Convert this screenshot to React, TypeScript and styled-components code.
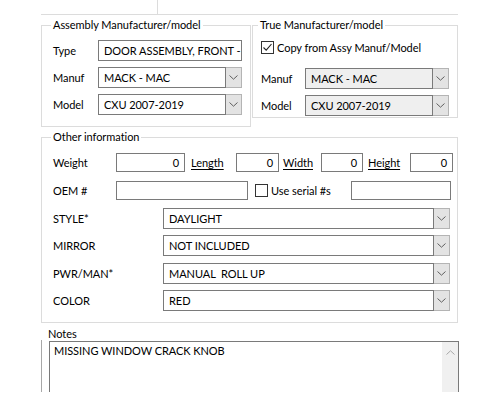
import React from "react";
import styled, { createGlobalStyle } from "styled-components";

const Global = createGlobalStyle`
  html, body { margin: 0; padding: 0; background: #fff; }
  body { font-family: Lato, "Liberation Sans", sans-serif; font-size: 11px; letter-spacing: -0.05px; color: #000; }
  * { box-sizing: border-box; }
`;

const Root = styled.div`
  width: 500px;
  height: 400px;
  overflow: hidden;
  background: #fff;
`;

const Column = styled.div`
  margin-left: 41px;
  width: 417px;
  display: flex;
  flex-direction: column;
`;

const TopStrip = styled.div`
  display: flex;
  height: 15px;
  border-bottom: 1px solid #dcdcdc;
`;

const TopCell = styled.div<{ $w: number }>`
  width: ${(p) => p.$w}px;
  border-right: 1px solid #dcdcdc;
`;

const GroupRow = styled.div`
  display: flex;
  align-items: flex-start;
  gap: 1px;
  margin-top: 10px;
`;

const Group = styled.section<{ $w: number; $pad: string; $mt?: number }>`
  position: relative;
  margin-top: ${(p) => p.$mt ?? 0}px;
  width: ${(p) => p.$w}px;
  border: 1px solid #dcdcdc;
  padding: ${(p) => p.$pad};
  display: flex;
  flex-direction: column;
`;

const Legend = styled.span<{ $left: number }>`
  position: absolute;
  top: -8px;
  left: ${(p) => p.$left}px;
  padding: 0 2px;
  height: 14px;
  line-height: 14px;
  background: #fff;
  white-space: nowrap;
`;

const Row = styled.div<{ $h: number; $mt?: number }>`
  display: flex;
  align-items: center;
  height: ${(p) => p.$h}px;
  margin-top: ${(p) => p.$mt ?? 0}px;
`;

const Label = styled.div<{ $w: number }>`
  width: ${(p) => p.$w}px;
  flex: none;
  white-space: nowrap;
`;

const LinkLabel = styled.div<{ $w: number; $ml: number }>`
  width: ${(p) => p.$w}px;
  margin-left: ${(p) => p.$ml}px;
  flex: none;
  text-decoration: underline;
  text-underline-offset: 2px;
  white-space: nowrap;
`;

const TextBox = styled.div<{ $w: number; $h: number; $right?: boolean }>`
  width: ${(p) => p.$w}px;
  height: ${(p) => p.$h}px;
  flex: none;
  border: 1px solid #7a7a7a;
  background: #fff;
  display: flex;
  align-items: center;
  justify-content: ${(p) => (p.$right ? "flex-end" : "flex-start")};
  padding: 0 5px;
  white-space: nowrap;
  overflow: hidden;
`;

const Combo = styled.div<{ $w: number }>`
  width: ${(p) => p.$w}px;
  height: 21px;
  flex: none;
  display: flex;
`;

const ComboField = styled.div<{ $disabled?: boolean }>`
  flex: 1;
  border: 1px solid #7a7a7a;
  background: ${(p) => (p.$disabled ? "#efefef" : "#fff")};
  display: flex;
  align-items: center;
  padding-left: 5px;
  white-space: pre;
  overflow: hidden;
`;

const ComboButton = styled.div`
  width: 16px;
  flex: none;
  background: #e3e3e3;
  border: 1px solid #b4b4b4;
  border-left: none;
  display: flex;
  align-items: center;
  justify-content: center;
`;

const CheckBox = styled.div<{ $ml?: number }>`
  width: 13px;
  height: 13px;
  flex: none;
  margin-left: ${(p) => p.$ml ?? 0}px;
  border: 1px solid #333;
  background: #fff;
  display: flex;
  align-items: center;
  justify-content: center;
`;

const CheckText = styled.div<{ $w?: number }>`
  margin-left: 3px;
  white-space: nowrap;
  ${(p) => (p.$w ? `width: ${p.$w}px; flex: none;` : "")}
`;

const NotesLabel = styled.div`
  margin-top: 5px;
  padding-left: 7px;
  line-height: 12px;
  height: 12px;
`;

const NotesBody = styled.div`
  height: 52px;
  border-left: 1px solid #a8a8a8;
  padding-left: 7px;
  padding-top: 1px;
`;

const NotesBox = styled.div`
  width: 410px;
  height: 51px;
  border: 1px solid #7a7a7a;
  border-bottom: none;
  display: flex;
`;

const NotesText = styled.div`
  flex: 1;
  padding: 2px 4px;
  line-height: 14px;
`;

const ScrollBar = styled.div`
  width: 16px;
  flex: none;
  background: #f0f0f0;
  display: flex;
  justify-content: center;
  padding-top: 8px;
`;

const Chevron = ({ up, color = "#606060" }: { up?: boolean; color?: string }) => (
  <svg width="9" height="5" viewBox="0 0 9 5">
    <path
      d={up ? "M0.5 4.5 L4.5 0.8 L8.5 4.5" : "M0.5 0.5 L4.5 4.2 L8.5 0.5"}
      fill="none"
      stroke={color}
      strokeWidth="1"
    />
  </svg>
);

const Check = () => (
  <svg width="11" height="11" viewBox="0 0 11 11">
    <path d="M1.5 5.5 L4.2 8.2 L9.5 2" fill="none" stroke="#222" strokeWidth="1.1" />
  </svg>
);

const ComboBox = ({ w, value, disabled }: { w: number; value: string; disabled?: boolean }) => (
  <Combo $w={w}>
    <ComboField $disabled={disabled}>{value}</ComboField>
    <ComboButton>
      <Chevron />
    </ComboButton>
  </Combo>
);

export default function App() {
  return (
    <Root>
      <Global />
      <Column>
        <TopStrip>
          <TopCell $w={117} />
        </TopStrip>

        <GroupRow>
          <Group $w={210} $pad="14px 8px 11px 11px">
            <Legend $left={9}>Assembly Manufacturer/model</Legend>
            <Row $h={21}>
              <Label $w={45}>Type</Label>
              <TextBox $w={144} $h={21}>DOOR ASSEMBLY, FRONT -</TextBox>
            </Row>
            <Row $h={21} $mt={6}>
              <Label $w={45}>Manuf</Label>
              <ComboBox w={144} value="MACK - MAC" />
            </Row>
            <Row $h={21} $mt={6}>
              <Label $w={45}>Model</Label>
              <ComboBox w={144} value="CXU 2007-2019" />
            </Row>
          </Group>

          <Group $w={206} $pad="14px 8px 1px 8px">
            <Legend $left={5}>True Manufacturer/model</Legend>
            <Row $h={14}>
              <CheckBox>
                <Check />
              </CheckBox>
              <CheckText>Copy from Assy Manuf/Model</CheckText>
            </Row>
            <Row $h={21} $mt={14}>
              <Label $w={44}>Manuf</Label>
              <ComboBox w={144} value="MACK - MAC" disabled />
            </Row>
            <Row $h={21} $mt={6}>
              <Label $w={44}>Model</Label>
              <ComboBox w={144} value="CXU 2007-2019" disabled />
            </Row>
          </Group>
        </GroupRow>

        <Group $w={417} $pad="15px 7px 11px 11px" $mt={10}>
          <Legend $left={9}>Other information</Legend>
          <Row $h={19}>
            <Label $w={63}>Weight</Label>
            <TextBox $w={69} $h={19} $right>0</TextBox>
            <LinkLabel $w={45} $ml={6}>Length</LinkLabel>
            <TextBox $w={43} $h={19} $right>0</TextBox>
            <LinkLabel $w={38} $ml={4}>Width</LinkLabel>
            <TextBox $w={42} $h={19} $right>0</TextBox>
            <LinkLabel $w={42} $ml={5}>Height</LinkLabel>
            <TextBox $w={43} $h={19} $right>0</TextBox>
          </Row>
          <Row $h={19} $mt={9}>
            <Label $w={63}>OEM #</Label>
            <TextBox $w={132} $h={19} />
            <CheckBox $ml={7} />
            <CheckText $w={80}>Use serial #s</CheckText>
            <TextBox $w={100} $h={19} />
          </Row>
          <Row $h={21} $mt={8}>
            <Label $w={110}>STYLE*</Label>
            <ComboBox w={287} value="DAYLIGHT" />
          </Row>
          <Row $h={21} $mt={6}>
            <Label $w={110}>MIRROR</Label>
            <ComboBox w={287} value="NOT INCLUDED" />
          </Row>
          <Row $h={21} $mt={7}>
            <Label $w={110}>PWR/MAN*</Label>
            <ComboBox w={287} value="MANUAL  ROLL UP" />
          </Row>
          <Row $h={21} $mt={6}>
            <Label $w={110}>COLOR</Label>
            <ComboBox w={287} value="RED" />
          </Row>
        </Group>

        <NotesLabel>Notes</NotesLabel>
        <NotesBody>
          <NotesBox>
            <NotesText>MISSING WINDOW CRACK KNOB</NotesText>
            <ScrollBar>
              <Chevron up color="#a8a8a8" />
            </ScrollBar>
          </NotesBox>
        </NotesBody>
      </Column>
    </Root>
  );
}
